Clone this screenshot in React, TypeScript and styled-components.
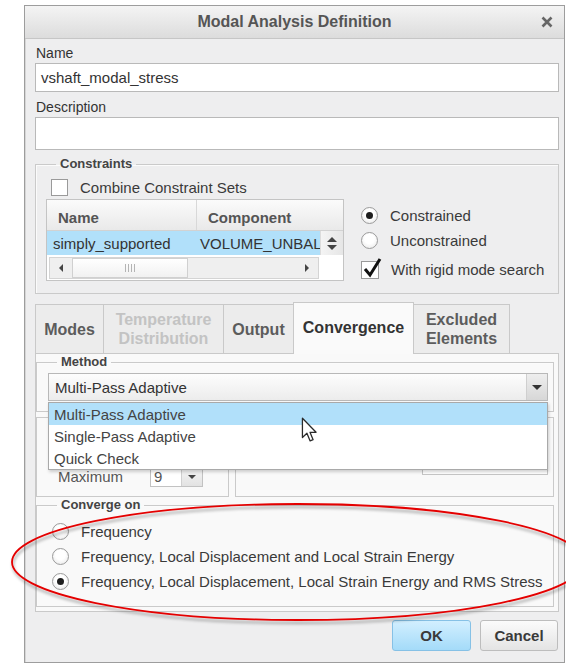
import styled, { createGlobalStyle } from 'styled-components';

const GlobalStyle = createGlobalStyle`
  html, body {
    margin: 0;
    padding: 0;
    background: #ffffff;
  }
  body {
    font-family: 'Liberation Sans', Arial, sans-serif;
    color: #333;
  }
`;

const Page = styled.div`
  position: relative;
  width: 566px;
  height: 664px;
  padding: 5px 0 0 24px;
  box-sizing: border-box;
  overflow: hidden;
`;

const Dialog = styled.div`
  width: 541px;
  height: 658px;
  box-sizing: border-box;
  border: 1px solid #9d9d9d;
  box-shadow: inset 1px 0 0 #d6d6d6;
  background: #eeeeef;
  display: flex;
  flex-direction: column;
`;

const TitleBar = styled.div`
  flex: none;
  height: 33px;
  box-sizing: border-box;
  border-bottom: 1px solid #c6c6c6;
  background: linear-gradient(#f4f4f4, #dcdcdc);
  display: grid;
  grid-template-columns: 1fr auto 1fr;
  align-items: center;
`;

const Title = styled.div`
  font-size: 16px;
  font-weight: bold;
  color: #555;
`;

const CloseButton = styled.div`
  justify-self: end;
  padding-right: 11px;
  display: flex;
`;

const Body = styled.div`
  flex: 1;
  padding: 6px 5px 0 10px;
  display: flex;
  flex-direction: column;
`;

const FieldLabel = styled.div<{ $gap?: number }>`
  font-size: 14px;
  line-height: 16px;
  color: #333;
  margin: ${(p) => p.$gap ?? 0}px 0 2px 1px;
`;

const TextBox = styled.div<{ $h: number }>`
  height: ${(p) => p.$h}px;
  box-sizing: border-box;
  border: 1px solid #b9b9b9;
  background: #fff;
  font-size: 15px;
  color: #333;
  padding-left: 5px;
  display: flex;
  align-items: center;
`;

const Group = styled.fieldset<{ $top?: number }>`
  margin: ${(p) => p.$top ?? 0}px 0 0;
  padding: 0;
  min-width: 0;
  border: 1px solid #cacaca;
  box-shadow: inset 1px 1px 0 #fbfbfb;
`;

const Legend = styled.legend`
  margin-left: 20px;
  padding: 0 4px;
  font-size: 13px;
  line-height: 16px;
  font-weight: bold;
  color: #444;
`;

const ConstraintsBody = styled.div`
  padding: 6px 0 7px 10px;
  display: flex;
  flex-direction: column;
  gap: 3px;
`;

const OptionRow = styled.label<{ $h?: number; $indent?: number }>`
  height: ${(p) => p.$h ?? 25}px;
  display: flex;
  align-items: center;
  gap: 12px;
  margin-left: ${(p) => p.$indent ?? 0}px;
  font-size: 15px;
  color: #3a3a3a;
  white-space: nowrap;
`;

const CheckBox = styled.span<{ $size?: number }>`
  position: relative;
  flex: none;
  width: ${(p) => p.$size ?? 17}px;
  height: ${(p) => p.$size ?? 17}px;
  box-sizing: border-box;
  border: 1px solid #9a9a9a;
  background: #fff;
  & svg {
    position: absolute;
    left: 1px;
    top: -5px;
  }
`;

const Radio = styled.span<{ $on?: boolean }>`
  flex: none;
  width: 17px;
  height: 17px;
  box-sizing: border-box;
  border-radius: 50%;
  border: 1px solid #9b9b9b;
  background: radial-gradient(circle at 50% 40%, #ffffff 40%, #e4e4e4 100%);
  display: flex;
  align-items: center;
  justify-content: center;
  &::after {
    content: '';
    display: ${(p) => (p.$on ? 'block' : 'none')};
    width: 7px;
    height: 7px;
    border-radius: 50%;
    background: #1e1e1e;
  }
`;

const ConstraintsRow = styled.div`
  display: flex;
  gap: 17px;
  align-items: flex-start;
`;

const Table = styled.div`
  width: 298px;
  height: 82px;
  box-sizing: border-box;
  border: 1px solid #c4c4c4;
  background: #fff;
  display: flex;
  flex-direction: column;
`;

const HeaderRow = styled.div`
  height: 30px;
  flex: none;
  display: flex;
  background: linear-gradient(#fbfbfb, #e9e9e9);
  border-bottom: 1px solid #d2d2d2;
`;

const HeadCell = styled.div<{ $w?: number }>`
  width: ${(p) => (p.$w ? `${p.$w}px` : 'auto')};
  flex: ${(p) => (p.$w ? 'none' : '1')};
  box-sizing: border-box;
  padding: 5px 0 0 11px;
  display: flex;
  align-items: center;
  font-size: 15px;
  font-weight: bold;
  color: #555;
  border-right: ${(p) => (p.$w ? '1px solid #d8d8d8' : 'none')};
`;

const DataRow = styled.div`
  height: 24px;
  flex: none;
  display: flex;
`;

const DataCell = styled.div<{ $w?: number }>`
  width: ${(p) => p.$w}px;
  flex: none;
  box-sizing: border-box;
  padding-left: ${(p) => (p.$w === 150 ? 6 : 3)}px;
  background: #b1e0fa;
  display: flex;
  align-items: center;
  overflow: hidden;
  white-space: nowrap;
  font-size: 15px;
  color: #333;
`;

const VSpin = styled.div`
  flex: 1;
  background: linear-gradient(90deg, #f4f4f4, #e6e6e6);
  border-left: 1px solid #dcdcdc;
  display: flex;
  flex-direction: column;
  align-items: center;
  justify-content: center;
  gap: 3px;
`;

const Tri = styled.span<{ $dir: 'up' | 'down' | 'left' | 'right'; $size?: number; $color?: string }>`
  width: 0;
  height: 0;
  border: ${(p) => p.$size ?? 5}px solid transparent;
  ${(p) => {
    const s = p.$size ?? 5;
    const c = p.$color ?? '#444';
    if (p.$dir === 'up') return `border-bottom: ${s}px solid ${c}; border-top-width: 0;`;
    if (p.$dir === 'down') return `border-top: ${s}px solid ${c}; border-bottom-width: 0;`;
    if (p.$dir === 'left') return `border-right: ${s}px solid ${c}; border-left-width: 0;`;
    return `border-left: ${s}px solid ${c}; border-right-width: 0;`;
  }}
`;

const ScrollRow = styled.div`
  flex: 1;
  display: flex;
  padding: 2px 24px 2px 2px;
`;

const HScroll = styled.div`
  flex: 1;
  box-sizing: border-box;
  border: 1px solid #d4d4d4;
  background: #efefef;
  display: flex;
  align-items: center;
`;

const ScrollArrow = styled.div`
  width: 22px;
  display: flex;
  justify-content: center;
`;

const Thumb = styled.div`
  width: 116px;
  height: 20px;
  box-sizing: border-box;
  border: 1px solid #d0d0d0;
  background: linear-gradient(#ffffff, #f1f1f1);
  display: flex;
  align-items: center;
  justify-content: center;
  gap: 2px;
  & i {
    width: 1px;
    height: 8px;
    background: #b4b4b4;
  }
`;

const Track = styled.div`
  flex: 1;
`;

const OptionsColumn = styled.div`
  padding-top: 4px;
  display: flex;
  flex-direction: column;
`;

const TabStrip = styled.div`
  margin-top: 8px;
  height: 51px;
  display: flex;
  align-items: flex-end;
  position: relative;
  z-index: 1;
`;

const Tab = styled.div<{ $w: number; $active?: boolean; $disabled?: boolean }>`
  width: ${(p) => p.$w}px;
  height: ${(p) => (p.$active ? 52 : 49)}px;
  margin-bottom: ${(p) => (p.$active ? -1 : 0)}px;
  box-sizing: border-box;
  border: 1px solid #c9c9c9;
  border-bottom: none;
  margin-right: -1px;
  background: ${(p) => (p.$active ? '#fafafa' : '#ececec')};
  color: ${(p) => (p.$disabled ? '#c3c3c3' : p.$active ? '#333' : '#5c5c5c')};
  font-size: 16px;
  font-weight: bold;
  line-height: 19px;
  white-space: pre-line;
  text-align: center;
  display: flex;
  align-items: center;
  justify-content: center;
  padding-bottom: ${(p) => (p.$active ? 2 : 0)}px;
`;

const TabPanel = styled.div`
  height: 259px;
  box-sizing: border-box;
  border: 1px solid #c9c9c9;
  background: #f9f9f9;
  padding: 0 4px 0 0;
  display: flex;
  flex-direction: column;
`;

const MethodBody = styled.div`
  padding: 3px 5px 10px 11px;
`;

const Combo = styled.div`
  position: relative;
  height: 28px;
  box-sizing: border-box;
  border: 1px solid #b8b8b8;
  background: linear-gradient(#fdfdfd, #ececec);
  display: flex;
  font-size: 15px;
  color: #333;
`;

const ComboText = styled.div`
  flex: 1;
  padding-left: 6px;
  display: flex;
  align-items: center;
`;

const ComboButton = styled.div`
  width: 20px;
  border-left: 1px solid #cfcfcf;
  background: linear-gradient(#eeeeee, #d7d7d7);
  display: flex;
  align-items: center;
  justify-content: center;
`;

const DropList = styled.div`
  position: absolute;
  left: -1px;
  top: 28px;
  width: 500px;
  box-sizing: border-box;
  border: 1px solid #a9a9a9;
  background: #fff;
  box-shadow: 1px 2px 3px rgba(0, 0, 0, 0.18);
  z-index: 5;
`;

const DropItem = styled.div<{ $hot?: boolean }>`
  height: 22px;
  padding-left: 5px;
  display: flex;
  align-items: center;
  background: ${(p) => (p.$hot ? '#b1e0fa' : 'transparent')};
  color: #444;
  font-size: 15px;
`;

const PassRow = styled.div`
  margin-top: 5px;
  display: flex;
  gap: 6px;
`;

const PassGroup = styled.div<{ $w?: number }>`
  width: ${(p) => (p.$w ? `${p.$w}px` : 'auto')};
  flex: ${(p) => (p.$w ? 'none' : '1')};
  height: 80px;
  box-sizing: border-box;
  border: 1px solid #cacaca;
  display: flex;
  flex-direction: column;
  justify-content: flex-end;
`;

const SpinRow = styled.div`
  height: 21px;
  margin: 0 0 9px 21px;
  display: flex;
  align-items: center;
  font-size: 15px;
  color: #555;
`;

const SpinLabel = styled.span`
  width: 92px;
`;

const SpinBox = styled.div`
  height: 21px;
  display: flex;
  box-sizing: border-box;
  border: 1px solid #c2c2c2;
  background: #fff;
`;

const SpinValue = styled.div`
  width: 27px;
  padding-left: 3px;
  font-size: 15px;
  line-height: 19px;
`;

const SpinButton = styled.div`
  width: 20px;
  border-left: 1px solid #d0d0d0;
  background: linear-gradient(#f6f6f6, #e2e2e2);
  display: flex;
  align-items: center;
  justify-content: center;
`;

const LimitBox = styled.div`
  align-self: flex-end;
  width: 126px;
  height: 23px;
  margin: 0 5px 21px 0;
  box-sizing: border-box;
  border: 1px solid #c6c6c6;
  background: #fff;
`;

const ConvergeBody = styled.div`
  padding: 6px 0 12px 15px;
  display: flex;
  flex-direction: column;
`;

const ButtonBar = styled.div`
  margin-top: 8px;
  display: flex;
  justify-content: flex-end;
  gap: 9px;
  padding-right: 1px;
`;

const Button = styled.button<{ $primary?: boolean; $w: number }>`
  width: ${(p) => p.$w}px;
  height: 31px;
  border-radius: 3px;
  border: 1px solid ${(p) => (p.$primary ? '#86c1e6' : '#bdbdbd')};
  background: ${(p) =>
    p.$primary ? 'linear-gradient(#d2efff, #a4dbf9)' : 'linear-gradient(#fbfbfb, #e4e4e4)'};
  font-family: inherit;
  font-size: 15px;
  font-weight: bold;
  color: #3a3a3a;
  padding: 0;
`;

const Annotation = styled.svg`
  position: absolute;
  left: 0;
  top: 0;
  pointer-events: none;
  z-index: 10;
`;

const Pointer = styled.svg`
  position: absolute;
  left: 301px;
  top: 417px;
  z-index: 11;
`;

const passOptions = ['Multi-Pass Adaptive', 'Single-Pass Adaptive', 'Quick Check'];

const convergeOptions = [
  { label: 'Frequency', on: false },
  { label: 'Frequency, Local Displacement and Local Strain Energy', on: false },
  { label: 'Frequency, Local Displacement, Local Strain Energy and RMS Stress', on: true },
];

const tabs = [
  { label: 'Modes', w: 69 },
  { label: 'Temperature\nDistribution', w: 121, disabled: true },
  { label: 'Output', w: 71 },
  { label: 'Convergence', w: 121, active: true },
  { label: 'Excluded\nElements', w: 97 },
];

export default function App() {
  return (
    <Page>
      <GlobalStyle />
      <Dialog>
        <TitleBar>
          <span />
          <Title>Modal Analysis Definition</Title>
          <CloseButton>
            <svg width="12" height="12" viewBox="0 0 12 12">
              <path d="M1.5 1.5 L10.5 10.5 M10.5 1.5 L1.5 10.5" stroke="#666" strokeWidth="2.6" />
            </svg>
          </CloseButton>
        </TitleBar>

        <Body>
          <FieldLabel>Name</FieldLabel>
          <TextBox $h={29}>vshaft_modal_stress</TextBox>
          <FieldLabel $gap={7}>Description</FieldLabel>
          <TextBox $h={33} />

          <Group $top={6}>
            <Legend>Constraints</Legend>
            <ConstraintsBody>
              <OptionRow $h={18} $indent={5}>
                <CheckBox />
                Combine Constraint Sets
              </OptionRow>
              <ConstraintsRow>
                <Table>
                  <HeaderRow>
                    <HeadCell $w={150}>Name</HeadCell>
                    <HeadCell>Component</HeadCell>
                  </HeaderRow>
                  <DataRow>
                    <DataCell $w={150}>simply_supported</DataCell>
                    <DataCell $w={123}>VOLUME_UNBAL.</DataCell>
                    <VSpin>
                      <Tri $dir="up" $size={5} />
                      <Tri $dir="down" $size={5} />
                    </VSpin>
                  </DataRow>
                  <ScrollRow>
                    <HScroll>
                      <ScrollArrow>
                        <Tri $dir="left" $size={4} />
                      </ScrollArrow>
                      <Thumb>
                        <i />
                        <i />
                        <i />
                        <i />
                      </Thumb>
                      <Track />
                      <ScrollArrow>
                        <Tri $dir="right" $size={4} />
                      </ScrollArrow>
                    </HScroll>
                  </ScrollRow>
                </Table>
                <OptionsColumn>
                  <OptionRow>
                    <Radio $on />
                    Constrained
                  </OptionRow>
                  <OptionRow>
                    <Radio />
                    Unconstrained
                  </OptionRow>
                  <OptionRow $h={33}>
                    <CheckBox $size={18}>
                      <svg width="20" height="22" viewBox="0 0 20 22">
                        <path d="M2 12 L7 18 L17 2" fill="none" stroke="#111" strokeWidth="3" strokeLinejoin="miter" />
                      </svg>
                    </CheckBox>
                    With rigid mode search
                  </OptionRow>
                </OptionsColumn>
              </ConstraintsRow>
            </ConstraintsBody>
          </Group>

          <TabStrip>
            {tabs.map((t) => (
              <Tab key={t.label} $w={t.w} $active={t.active} $disabled={t.disabled}>
                {t.label}
              </Tab>
            ))}
          </TabStrip>
          <TabPanel>
            <Group>
              <Legend>Method</Legend>
              <MethodBody>
                <Combo>
                  <ComboText>Multi-Pass Adaptive</ComboText>
                  <ComboButton>
                    <Tri $dir="down" $size={5} $color="#333" />
                  </ComboButton>
                  <DropList>
                    {passOptions.map((o, i) => (
                      <DropItem key={o} $hot={i === 0}>
                        {o}
                      </DropItem>
                    ))}
                  </DropList>
                </Combo>
              </MethodBody>
            </Group>

            <PassRow>
              <PassGroup $w={193}>
                <SpinRow>
                  <SpinLabel>Maximum</SpinLabel>
                  <SpinBox>
                    <SpinValue>9</SpinValue>
                    <SpinButton>
                      <Tri $dir="down" $size={4} $color="#444" />
                    </SpinButton>
                  </SpinBox>
                </SpinRow>
              </PassGroup>
              <PassGroup>
                <LimitBox />
              </PassGroup>
            </PassRow>

            <Group>
              <Legend>Converge on</Legend>
              <ConvergeBody>
                {convergeOptions.map((o) => (
                  <OptionRow key={o.label}>
                    <Radio $on={o.on} />
                    {o.label}
                  </OptionRow>
                ))}
              </ConvergeBody>
            </Group>
          </TabPanel>

          <ButtonBar>
            <Button $primary $w={79}>
              OK
            </Button>
            <Button $w={78}>Cancel</Button>
          </ButtonBar>
        </Body>
      </Dialog>

      <Pointer width="17" height="27" viewBox="0 0 13 21">
        <path
          d="M1 1 L1 16 L4.5 12.6 L7 18.6 L9.3 17.6 L6.9 11.9 L11.6 11.9 Z"
          fill="#fff"
          stroke="#2a2a2a"
          strokeWidth="1"
          strokeLinejoin="round"
        />
      </Pointer>

      <Annotation width="566" height="664" viewBox="0 0 566 664">
        <defs>
          <filter id="inkShadow" x="-10%" y="-30%" width="120%" height="160%">
            <feDropShadow dx="1" dy="3" stdDeviation="1.6" floodColor="#000" floodOpacity="0.35" />
          </filter>
        </defs>
        <ellipse
          cx="298"
          cy="562"
          rx="286"
          ry="58"
          fill="none"
          stroke="#e40000"
          strokeWidth="1.8"
          filter="url(#inkShadow)"
        />
      </Annotation>
    </Page>
  );
}
